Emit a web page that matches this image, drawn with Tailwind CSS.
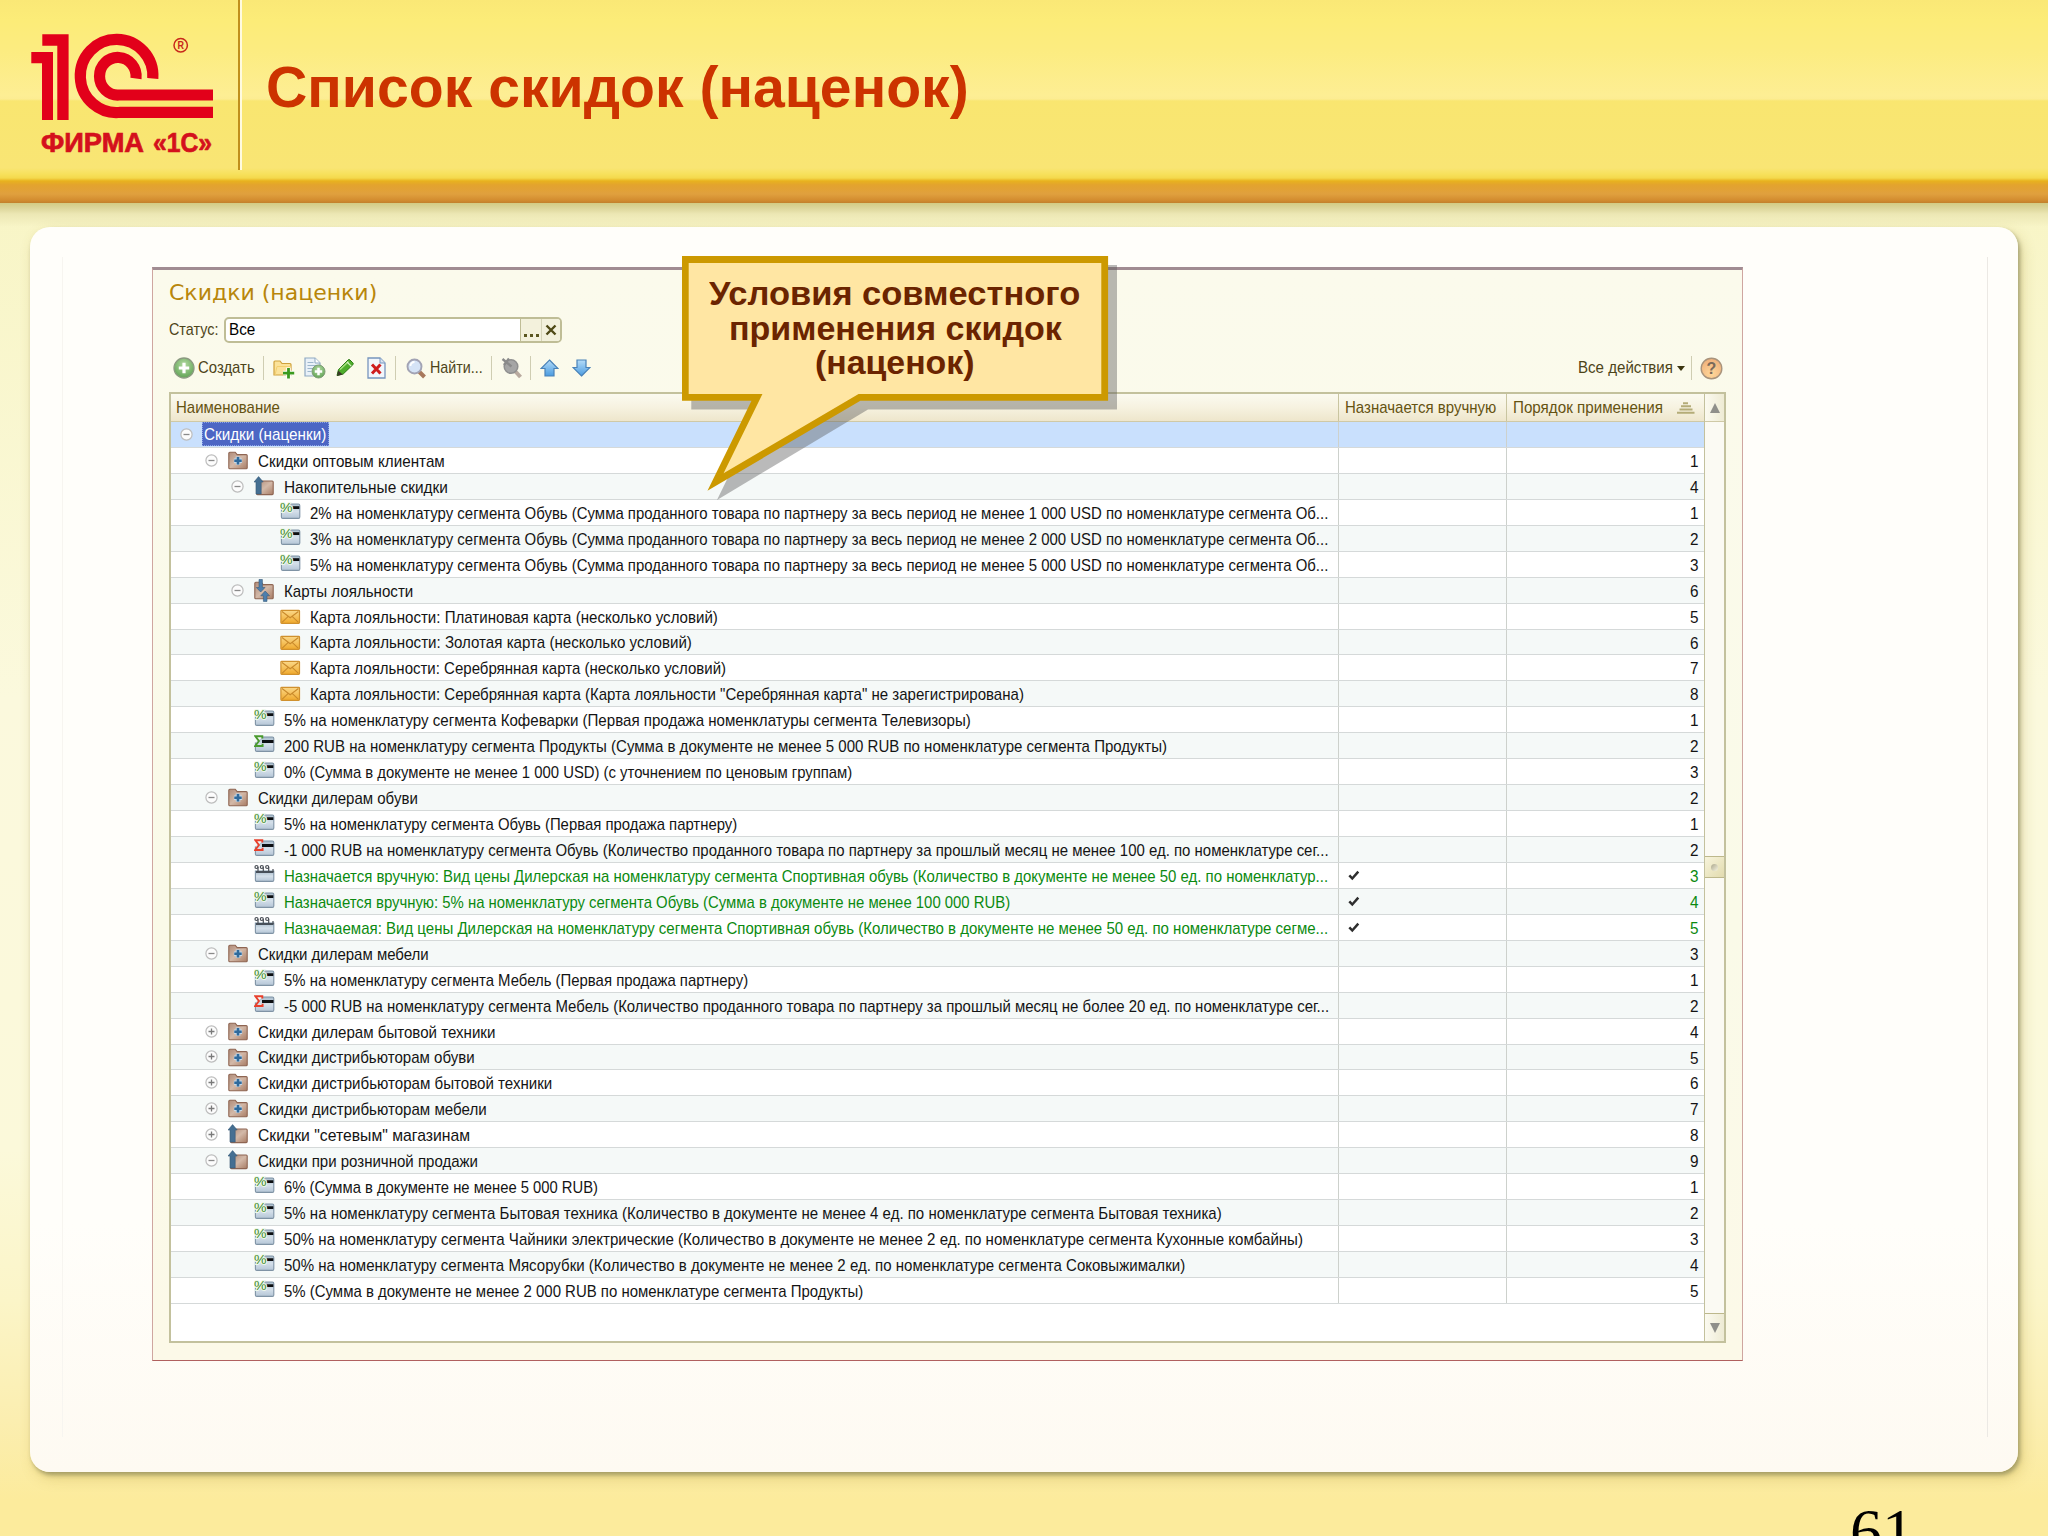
<!DOCTYPE html>
<html lang="ru">
<head>
    <meta charset="UTF-8">
    <meta name="viewport" content="width=device-width, initial-scale=1.0">
    <title>Список скидок (наценок)</title>
    <script src="https://cdn.jsdelivr.net/npm/@tailwindcss/browser@4"></script>
</head>
<body class="bg-[#fceb9c] font-['Liberation_Sans',Arial,sans-serif] overflow-hidden">

<!-- Иконки -->
<svg class="absolute size-0" width="0" height="0">
    <defs>
        <linearGradient id="gFolder" x1="0" y1="0" x2="1" y2="1"><stop offset="0" stop-color="#b08c7a"/><stop offset=".5" stop-color="#d3b9a8"/><stop offset="1" stop-color="#a87c64"/></linearGradient>
        <linearGradient id="gCard" x1="0" y1="0" x2="0" y2="1"><stop offset="0" stop-color="#a9bccb"/><stop offset=".5" stop-color="#d5e0ea"/><stop offset="1" stop-color="#b4c5d6"/></linearGradient>
        <linearGradient id="gMail" x1="0" y1="0" x2="0" y2="1"><stop offset="0" stop-color="#fbd98a"/><stop offset="1" stop-color="#f0a92c"/></linearGradient>
        <linearGradient id="gBlue" x1="0" y1="0" x2="0" y2="1"><stop offset="0" stop-color="#b5dcf8"/><stop offset="1" stop-color="#4a9be0"/></linearGradient>
        <radialGradient id="gGreen" cx=".5" cy=".35" r=".6"><stop offset="0" stop-color="#b4dba2"/><stop offset="1" stop-color="#68a85c"/></radialGradient>
        <radialGradient id="gHelp" cx=".5" cy=".75" r=".7"><stop offset="0" stop-color="#ffd79a"/><stop offset="1" stop-color="#f0b27c"/></radialGradient>
        <symbol id="i-minus" viewBox="0 0 13 13"><circle cx="6.5" cy="6.5" r="5.6" fill="#fcfcfc" stroke="#bdbdbd" stroke-width="1.2"/><path d="M3.5 6.5h6" stroke="#8a8a8a" stroke-width="1.3"/></symbol>
        <symbol id="i-plus" viewBox="0 0 13 13"><circle cx="6.5" cy="6.5" r="5.6" fill="#fcfcfc" stroke="#bdbdbd" stroke-width="1.2"/><path d="M3.5 6.5h6M6.5 3.5v6" stroke="#7a7a7a" stroke-width="1.3"/></symbol>
        <symbol id="i-folder" viewBox="0 0 21 25"><path d="M.8 19.8V5.2q0-1 1-1h5.4l2 2.4h9q1 0 1 1v12.2q0 1-1 1H1.8q-1 0-1-1z" fill="url(#gFolder)" stroke="#8e6552" stroke-width="1.1"/><path d="M10 8.6v8.2M5.9 12.7h8.2" stroke="#c4d8e8" stroke-width="4.6"/><path d="M10 9v7.4M6.3 12.7h7.4" stroke="#2f6a9c" stroke-width="2.6"/></symbol>
        <symbol id="i-folderup" viewBox="0 0 21 25"><path d="M2.5 19.6V7h15.7q1 0 1 1v11.6q0 1-1 1H3.5q-1 0-1-1z" fill="url(#gFolder)" stroke="#8e6552" stroke-width="1.1"/><path d="M4.6 2.6L9.2 8H7.2v12H2V8H0z" fill="#456f92" stroke="#375a78" stroke-width=".6"/></symbol>
        <symbol id="i-folderboth" viewBox="0 0 21 25"><path d="M.8 19.8V5.2q0-1 1-1h5.4l2 2.4h9q1 0 1 1v12.2q0 1-1 1H1.8q-1 0-1-1z" fill="url(#gFolder)" stroke="#8e6552" stroke-width="1.1"/><path d="M5 1.5h3.4v8H11L6.700 14 2.300 9.500H5z" fill="#4d7fae" stroke="#375a78" stroke-width=".6"/><path d="M9.400 23.400h3.600v-5.600h2.500L11.200 13l-4.400 4.800h2.600z" fill="#4d7fae" stroke="#375a78" stroke-width=".6"/></symbol>
        <symbol id="i-card" viewBox="0 0 21 25"><path d="M1.4 9.500V17q0 1.400 1.400 1.400h15.600q1.400 0 1.400-1.400V5.400Q19.800 4 18.400 4H9" fill="url(#gCard)" stroke="#7f93a5" stroke-width="1.100"/></symbol>
        <symbol id="i-percent" viewBox="0 0 21 25"><use href="#i-card" width="21" height="25"/><path d="M12.500 6.200h6.800v2.800h-6.800z" fill="#0c0f12"/><text x="0" y="12" font-size="13" fill="#3f8a2c" stroke="#eef8ea" stroke-width="2" paint-order="stroke" font-family="Liberation Sans" textLength="12.500" lengthAdjust="spacingAndGlyphs">%</text></symbol>
        <symbol id="i-sum" viewBox="0 0 21 25"><use href="#i-card" width="21" height="25"/><path d="M8 7h11.500v3H8z" fill="#0c0f12"/><path d="M8.300 5.500V3.300H1.400L4.900 8l-3.700 5h7.400v-2.300" fill="none" stroke="#4a9a2e" stroke-width="1.900"/></symbol>
        <symbol id="i-sumred" viewBox="0 0 21 25"><use href="#i-card" width="21" height="25"/><path d="M8 7h11.500v3H8z" fill="#0c0f12"/><path d="M8.300 5.500V3.300H1.400L4.900 8l-3.700 5h7.400v-2.300" fill="none" stroke="#e8402c" stroke-width="1.900"/></symbol>
        <symbol id="i-price" viewBox="0 0 21 25"><path d="M1.400 8h18.400v9q0 1.400-1.400 1.400H2.800q-1.400 0-1.400-1.400z" fill="url(#gCard)" stroke="#7f93a5" stroke-width="1.100"/><path d="M2 8h17.500v2H2z" fill="#47505a"/><g fill="#f4f4f4" stroke="#4a4f57" stroke-width="1.200"><circle cx="2.500" cy="4" r="1.500"/><circle cx="7.800" cy="4" r="1.500"/><circle cx="13.200" cy="4" r="1.500"/><path d="M4 4v5M9.300 4v5M14.700 4v5M19 6v3"/></g></symbol>
        <symbol id="i-mail" viewBox="0 0 21 25"><rect x=".900" y="6.300" width="18.600" height="13" rx=".800" fill="url(#gMail)" stroke="#d0912e" stroke-width="1.200"/><path d="M2 7.500l8.200 6.300 8.200-6.300M2 18.400l6-5.800M18.400 18.400l-6-5.800" fill="none" stroke="#c98a2c" stroke-width="1.100"/></symbol>
        <symbol id="i-check" viewBox="0 0 12 12"><path d="M1.300 6.300l3 3.200 6-6.800" fill="none" stroke="#2e2e2e" stroke-width="2.500"/></symbol>
    </defs>
</svg>

<div class="w-[2048px] h-[1536px] overflow-hidden flex flex-col bg-[linear-gradient(180deg,#f8f5c6_203px,#fbf9dd_700px,#fbf9da_1150px,#fbf5c8_1300px,#fbeeb0_1420px,#fceb9c_1500px)]">

    <!-- Шапка слайда -->
    <header class="h-[203px] shrink-0 flex items-start bg-[linear-gradient(180deg,#fae876_0px,#fcec78_20px,#fcec80_50px,#fdee94_96px,#fcec92_99px,#f9e670_101px,#f9e574_168px,#f7e15c_174px,#f4d94c_178px,#e8b21e_181px,#e3a32e_185px,#e0a03e_194px,#d38d30_200px,#c27f2c_203px)]">
        <div class="w-[238px] h-[170px] shrink-0">
            <svg width="238" height="170" viewBox="0 0 238 170">
                <g fill="#e2001a">
                    <path d="M42.300 34.300H68.600V120H57.300V45.700H42.300z"/>
                    <path d="M31.300 52H53V120H42V63.300H31.300z"/>
                </g>
                <g fill="none" stroke="#e2001a" stroke-width="11.200">
                    <path d="M213 112.300H120.500A36.300 36.600 0 1 1 152.800 78.500"/>
                    <path d="M213 95H119A18.300 18.800 0 1 1 136 78.500"/>
                </g>
                <circle cx="180.700" cy="45.300" r="6.700" fill="none" stroke="#c8281c" stroke-width="1.500"/>
                <text x="177.500" y="49.300" font-size="11" font-weight="bold" fill="#c8281c" textLength="6.500" lengthAdjust="spacingAndGlyphs">R</text>
                <text x="41" y="151.500" font-size="27" font-weight="bold" fill="#d4101c" stroke="#d4101c" stroke-width=".700" textLength="103" lengthAdjust="spacingAndGlyphs">ФИРМА</text>
                <text x="153" y="151.500" font-size="27" font-weight="bold" fill="#d4101c" stroke="#d4101c" stroke-width=".700" textLength="59" lengthAdjust="spacingAndGlyphs">«1С»</text>
            </svg>
        </div>
        <div class="w-[2px] h-[170px] bg-[#c08f1c]"></div>
        <div class="w-[2px] h-[170px] bg-[#fffbe0]"></div>
        <h1 class="ml-[24px] mt-[54px] text-[57px] leading-[66px] font-bold text-[#cc3300]"><span class="inline-block origin-left whitespace-nowrap" data-w="703">Список скидок (наценок)</span></h1>
    </header>
    <div class="h-[24px] shrink-0 bg-[linear-gradient(180deg,#d2ca84_0px,#dcd59a_5px,#ece7b4_11px,#f8f5c600_24px)]"></div>

    <!-- Карточка с содержимым -->
    <main class="relative ml-[30px] w-[1988px] h-[1245px] shrink-0 rounded-[20px] pt-[40px] pl-[122px] bg-[linear-gradient(180deg,#fffefa,#fffefa_80%,#fefaf2)] shadow-[2px_3px_4px_rgba(120,120,80,0.6),4px_6px_14px_rgba(170,140,40,0.3)]">
        <div class="absolute left-[32px] top-[30px] w-px h-[1180px] bg-[#f7f5f0]"></div>
        <div class="absolute left-[1957px] top-[30px] w-px h-[1180px] bg-[#ece9e4]"></div>

        <section class="w-[1591px] h-[1094px] border border-[#cfa6a0] border-b-[#b0605e] border-t-[3px] border-t-[#a18c92] bg-[linear-gradient(180deg,#fbfaec,#fafae8_60%,#fcf9e8)] pl-[16px] flex flex-col">
            <h2 class="h-[44px] pt-[9px] text-[22px] leading-[28px] text-[#b8860b] font-['DejaVu_Sans',Verdana,sans-serif]"><span class="inline-block origin-left whitespace-nowrap" data-w="208">Скидки (наценки)</span></h2>

            <!-- Отбор по статусу -->
            <div class="flex items-center h-[30px] mt-px text-[17px] text-[#4d4419]">
                <span class="inline-block shrink-0 origin-left whitespace-nowrap" data-w="49">Статус:</span>
                <div class="ml-[6px] w-[338px] h-[26px] border-2 border-[#bfbd96] rounded-[5px] bg-white flex items-center text-black overflow-hidden">
                    <div class="w-[294px] pl-[3px]"><span class="inline-block shrink-0 origin-left whitespace-nowrap" data-w="26">Все</span></div>
                    <div class="w-[21px] h-full border-l border-[#bfbd96] bg-[#f3f1dc] flex items-end justify-center gap-[3px] pb-[4px]">
                        <i class="size-[3px] bg-[#5a5620]"></i><i class="size-[3px] bg-[#5a5620]"></i><i class="size-[3px] bg-[#5a5620]"></i>
                    </div>
                    <div class="flex-1 h-full border-l border-[#d6d4b8] bg-[#f3f1dc] flex items-center justify-center">
                        <svg width="12" height="12" viewBox="0 0 12 12"><path d="M1.500 1.500l9 9M10.500 1.500l-9 9" stroke="#4f4a16" stroke-width="2.400"/></svg>
                    </div>
                </div>
            </div>

            <!-- Панель команд -->
            <div class="flex items-center h-[26px] mt-[10px] text-[17px] text-[#4d4419] w-[1557px]">
                <svg class="ml-[4px]" width="22" height="22" viewBox="0 0 22 22"><circle cx="11" cy="11" r="10" fill="url(#gGreen)" stroke="#8b9a80" stroke-width="1.300"/><path d="M11 5.800v10.400M5.800 11h10.400" stroke="#fff" stroke-width="3.200"/></svg>
                <span class="ml-[3px] inline-block shrink-0 origin-left whitespace-nowrap" data-w="57">Создать</span>
                <i class="ml-[8px] w-px h-[24px] bg-[#cfcdb2]"></i>
                <svg class="ml-[9px]" width="22" height="22" viewBox="0 0 22 22"><path d="M1 18V5q0-1 1-1h5l2 2.500h8q1 0 1 1V18z" fill="#fbe29a" stroke="#cfa13c" stroke-width="1.200"/><path d="M2 18l2-8.500h14" fill="none" stroke="#f3cf70"/><path d="M15.500 10.500v11M10 16h11" stroke="#fff" stroke-width="4.500"/><path d="M15.500 11v10.500M10 16.200h11.200" stroke="#3b9a1e" stroke-width="2.800"/></svg>
                <svg class="ml-[9px]" width="22" height="22" viewBox="0 0 22 22"><path d="M1 1h10l5 5v13H1z" fill="#e9f1f8" stroke="#8fa9c2" stroke-width="1.200"/><path d="M11 1v5h5" fill="#fff" stroke="#8fa9c2"/><path d="M3.500 5.500h6M3.500 8.500h10M3.500 11.500h6M3.500 14.500h4" stroke="#9db6cc" stroke-width="1.200"/><circle cx="14.500" cy="14.500" r="6.500" fill="url(#gGreen)" stroke="#7f9d76"/><path d="M14.500 10.800v7.400M10.800 14.500h7.400" stroke="#fff" stroke-width="2.500"/></svg>
                <svg class="ml-[10px]" width="19" height="20" viewBox="0 0 19 20"><path d="M1 17.500l1.500-6L12 2q1-1 2 0l2.800 2.800q1 1 0 2L7.200 16z" fill="#4fae2c" stroke="#2c7a16"/><path d="M4 11.500L12.500 3.500" stroke="#a5e07e" stroke-width="1.600"/><path d="M11 4l4.200 4.200" stroke="#d8f0c8" stroke-width="1.200"/><path d="M1 18l1.200-5.500 4.500 4z" fill="#3a3a28"/></svg>
                <svg class="ml-[12px]" width="19" height="22" viewBox="0 0 19 22"><path d="M1 1h12l5 5v15H1z" fill="#f2f6fb" stroke="#7795bd" stroke-width="1.300"/><path d="M13 1v5h5" fill="#d8e4f2" stroke="#7795bd"/><path d="M5 7.500l8.500 9M13.500 7.500l-8.500 9" stroke="#cf1d1d" stroke-width="3"/></svg>
                <i class="ml-[9px] w-px h-[24px] bg-[#cfcdb2]"></i>
                <svg class="ml-[10px]" width="21" height="21" viewBox="0 0 21 21"><path d="M12.500 13l6 6" stroke="#a8785c" stroke-width="4"/><circle cx="8.500" cy="8.500" r="7" fill="#d5e3f6" stroke="#a2a3b4" stroke-width="1.900"/><path d="M4.500 8a4 4 0 0 1 4-4" fill="none" stroke="#fff" stroke-width="1.800"/></svg>
                <span class="ml-[3px] inline-block shrink-0 origin-left whitespace-nowrap" data-w="53">Найти...</span>
                <i class="ml-[9px] w-px h-[24px] bg-[#cfcdb2]"></i>
                <svg class="ml-[9px]" width="22" height="22" viewBox="0 0 22 22"><path d="M14 14l5.500 6" stroke="#b9aa9f" stroke-width="4"/><circle cx="10" cy="9.500" r="6.800" fill="#a5a5a5" stroke="#8f8f8f" stroke-width="1.500"/><path d="M1.500 2l9 7.500M8 1.500l-5 6.500" stroke="#8a8a8a" stroke-width="2.400"/></svg>
                <i class="ml-[7px] w-px h-[24px] bg-[#cfcdb2]"></i>
                <svg class="ml-[9px]" width="19" height="18" viewBox="0 0 19 18"><path d="M9.500 1L18 9.500h-4V17H5V9.500H1z" fill="url(#gBlue)" stroke="#4a82b8" stroke-width="1.200"/></svg>
                <svg class="ml-[13px]" width="19" height="18" viewBox="0 0 19 18"><path d="M9.500 17L18 8.500h-4V1H5v7.500H1z" fill="url(#gBlue)" stroke="#4a82b8" stroke-width="1.200"/></svg>
                <div class="ml-auto flex items-center">
                    <span class="inline-block shrink-0 origin-left whitespace-nowrap" data-w="95">Все действия</span>
                    <svg class="ml-[4px]" width="8" height="5" viewBox="0 0 8 5"><path d="M0 0h8L4 5z" fill="#3c3510"/></svg>
                    <i class="ml-[6px] w-px h-[24px] bg-[#cfcdb2]"></i>
                    <svg class="ml-[8px] mr-[3px]" width="23" height="23" viewBox="0 0 23 23"><circle cx="11.500" cy="11.500" r="10.300" fill="url(#gHelp)" stroke="#a8937c" stroke-width="1.400"/><text x="11.500" y="17" text-anchor="middle" font-size="16" font-weight="bold" fill="#7b6a5a">?</text></svg>
                </div>
            </div>

            <!-- Таблица -->
            <div class="mt-[11px] w-[1557px] h-[951px] border-2 border-[#c3c19d] bg-white flex">
                <div class="w-[1533px] shrink-0 flex flex-col">
                    <div class="h-[28px] shrink-0 flex items-center border-b border-[#cfc9a6] bg-[linear-gradient(180deg,#fbfaf0,#f6f2e0_50%,#eee6cc)] text-[17px] text-[#655312]">
                        <div class="w-[1168px] shrink-0 h-full flex items-center pl-[5px] border-r border-[#c9c5a0]"><span class="inline-block shrink-0 origin-left whitespace-nowrap" data-w="104">Наименование</span></div>
                        <div class="w-[168px] shrink-0 h-full flex items-center pl-[6px] border-r border-[#c9c5a0]"><span class="inline-block shrink-0 origin-left whitespace-nowrap" data-w="151">Назначается вручную</span></div>
                        <div class="flex-1 h-full flex items-center pl-[6px]">
                            <span class="inline-block shrink-0 origin-left whitespace-nowrap" data-w="150">Порядок применения</span>
                            <svg class="ml-[14px]" width="18" height="12" viewBox="0 0 18 12"><path d="M6 1.200h5M4 4.200h10M2.500 7.400h13M0 10.700h17.500" stroke="#b4ac78" stroke-width="2"/></svg>
                        </div>
                    </div>
                    <div id="rows" class="flex-1"></div>
                </div>
                <!-- Полоса прокрутки -->
                <div class="flex-1 border-l border-[#c3c19d] bg-[#fbfaf3] flex flex-col">
                    <div class="h-[28px] flex items-center justify-center border-b border-[#cfc9a6] bg-[linear-gradient(90deg,#fbfaf0,#eeebd4)]">
                        <svg width="10" height="10" viewBox="0 0 10 10"><path d="M5 0l5 10H0z" fill="#8f8f8a"/></svg>
                    </div>
                    <div class="h-[434px]"></div>
                    <div class="h-[22px] border-y border-[#bdb88c] bg-[linear-gradient(135deg,#f7f4dc,#e2dbae)] flex items-center justify-center">
                        <i class="size-[7px] rounded-full bg-[linear-gradient(135deg,#aca88c,#f6f4e2)]"></i>
                    </div>
                    <div class="flex-1"></div>
                    <div class="h-[28px] flex items-center justify-center border-t border-[#bdb88c] bg-[linear-gradient(90deg,#fbfaf0,#eeebd4)]">
                        <svg width="10" height="10" viewBox="0 0 10 10"><path d="M5 10L0 0h10z" fill="#8f8f8a"/></svg>
                    </div>
                </div>
            </div>
        </section>

        <!-- Выноска -->
        <div class="absolute left-[652px] top-[29px] w-[440px] h-[250px]">
            <svg class="absolute left-0 top-0" width="440" height="250" viewBox="682 256 440 250">
                <path d="M691.300 265H1117V409.500H868L717 500L761 409.500H691.300V265z" fill="#5a5a5a" fill-opacity=".42"/>
                <path d="M685.300 259.500H1104.700V397.300H859.500L715.500 482L757 397.300H685.300z" fill="#ffe6a3" stroke="#cc9900" stroke-width="6.800" stroke-miterlimit="12"/>
            </svg>
            <div class="relative w-[426px] pt-[21px] flex flex-col items-center font-bold text-[33px] leading-[34.600px] text-[#6b2400]">
                <span class="inline-block shrink-0 origin-left whitespace-nowrap" data-w="371">Условия совместного</span>
                <span class="inline-block shrink-0 origin-left whitespace-nowrap" data-w="333">применения скидок</span>
                <span class="inline-block shrink-0 origin-left whitespace-nowrap" data-w="160">(наценок)</span>
            </div>
        </div>
    </main>

    <footer class="h-[64px] shrink-0 pl-[1850px] pt-[24px] font-['Liberation_Serif','Times_New_Roman',serif] text-[64px] leading-[72px] text-black">61</footer>
</div>

<script>
    // уровень, узел (+/-), иконка, текст, порядок, ширина текста, вручную
    const rows = [
        [0, "minus", "", "Скидки (наценки)", "", 122],
        [1, "minus", "folder", "Скидки оптовым клиентам", 1, 187],
        [2, "minus", "folderup", "Накопительные скидки", 4, 164],
        [3, "", "percent", "2% на номенклатуру сегмента Обувь (Сумма проданного товара по партнеру за весь период не менее 1 000 USD по номенклатуре сегмента Об...", 1, 1018],
        [3, "", "percent", "3% на номенклатуру сегмента Обувь (Сумма проданного товара по партнеру за весь период не менее 2 000 USD по номенклатуре сегмента Об...", 2, 1018],
        [3, "", "percent", "5% на номенклатуру сегмента Обувь (Сумма проданного товара по партнеру за весь период не менее 5 000 USD по номенклатуре сегмента Об...", 3, 1018],
        [2, "minus", "folderboth", "Карты лояльности", 6, 129],
        [3, "", "mail", "Карта лояльности: Платиновая карта (несколько условий)", 5, 408],
        [3, "", "mail", "Карта лояльности: Золотая карта (несколько условий)", 6, 382],
        [3, "", "mail", "Карта лояльности: Серебрянная карта (несколько условий)", 7, 416],
        [3, "", "mail", "Карта лояльности: Серебрянная карта (Карта лояльности \"Серебрянная карта\" не зарегистрирована)", 8, 714],
        [2, "", "percent", "5% на номенклатуру сегмента Кофеварки (Первая продажа номенклатуры сегмента Телевизоры)", 1, 687],
        [2, "", "sum", "200 RUB на номенклатуру сегмента Продукты (Сумма в документе не менее 5 000 RUB по номенклатуре сегмента Продукты)", 2, 883],
        [2, "", "percent", "0% (Сумма в документе не менее 1 000 USD) (с уточнением по ценовым группам)", 3, 568],
        [1, "minus", "folder", "Скидки дилерам обуви", 2, 160],
        [2, "", "percent", "5% на номенклатуру сегмента Обувь (Первая продажа партнеру)", 1, 453],
        [2, "", "sumred", "-1 000 RUB на номенклатуру сегмента Обувь (Количество проданного товара по партнеру за прошлый месяц не менее 100 ед. по номенклатуре сег...", 2, 1045],
        [2, "", "price", "Назначается вручную: Вид цены Дилерская на номенклатуру сегмента Спортивная обувь (Количество в документе не менее 50 ед. по номенклатур...", 3, 1044, true],
        [2, "", "percent", "Назначается вручную: 5% на номенклатуру сегмента Обувь (Сумма в документе не менее 100 000 RUB)", 4, 726, true],
        [2, "", "price", "Назначаемая: Вид цены Дилерская на номенклатуру сегмента Спортивная обувь (Количество в документе не менее 50 ед. по номенклатуре сегме...", 5, 1044, true],
        [1, "minus", "folder", "Скидки дилерам мебели", 3, 171],
        [2, "", "percent", "5% на номенклатуру сегмента Мебель (Первая продажа партнеру)", 1, 464],
        [2, "", "sumred", "-5 000 RUB на номенклатуру сегмента Мебель (Количество проданного товара по партнеру за прошлый месяц не более 20 ед. по номенклатуре сег...", 2, 1045],
        [1, "plus", "folder", "Скидки дилерам бытовой техники", 4, 237],
        [1, "plus", "folder", "Скидки дистрибьюторам обуви", 5, 217],
        [1, "plus", "folder", "Скидки дистрибьюторам бытовой техники", 6, 294],
        [1, "plus", "folder", "Скидки дистрибьюторам мебели", 7, 229],
        [1, "plus", "folderup", "Скидки \"сетевым\" магазинам", 8, 212],
        [1, "minus", "folderup", "Скидки при розничной продажи", 9, 220],
        [2, "", "percent", "6% (Сумма в документе не менее 5 000 RUB)", 1, 314],
        [2, "", "percent", "5% на номенклатуру сегмента Бытовая техника (Количество в документе не менее 4 ед. по номенклатуре сегмента Бытовая техника)", 2, 938],
        [2, "", "percent", "50% на номенклатуру сегмента Чайники электрические (Количество в документе не менее 2 ед. по номенклатуре сегмента Кухонные комбайны)", 3, 1019],
        [2, "", "percent", "50% на номенклатуру сегмента Мясорубки (Количество в документе не менее 2 ед. по номенклатуре сегмента Соковыжималки)", 4, 901],
        [2, "", "percent", "5% (Сумма в документе не менее 2 000 RUB по номенклатуре сегмента Продукты)", 5, 579]
    ];

    document.getElementById("rows").innerHTML = rows.map(([level, node, icon, text, order, width, manual], i) => {
        const bg = i === 0 ? "bg-[#c9e0fd]" : i % 2 ? "bg-white" : "bg-[#f5f9f8]";
        const color = manual ? "text-[#0b8a10]" : "text-[#141414]";
        const label = i === 0
            ? `<span class="ml-[9px] h-[24px] w-[127px] shrink-0 pl-[2px] pt-px flex items-center bg-[#4c66c4] text-white outline-1 outline-dotted outline-[#8fa6e6] -outline-offset-1"><span class="inline-block shrink-0 origin-left whitespace-nowrap" data-w="${width}">${text}</span></span>`
            : `<svg class="ml-[10px] shrink-0 self-start" width="21" height="25"><use href="#i-${icon}"/></svg><span class="ml-[9px] pt-[2px] inline-block shrink-0 origin-left whitespace-nowrap" data-w="${width}">${text}</span>`;
        return `<div class="flex h-[25.940px] border-b border-[#d5d9d9] text-[17px] leading-[25px] ${bg} ${color}">
            <div class="w-[1168px] shrink-0 flex items-center border-r border-[#cdd1cc]" style="padding-left:${8.5 + level * 25.85}px">
                <svg class="shrink-0" width="13" height="13">${node ? `<use href="#i-${node}"/>` : ""}</svg>${label}
            </div>
            <div class="w-[168px] shrink-0 flex items-center pl-[9px] border-r border-[#cdd1cc]">${manual ? `<svg width="12" height="12"><use href="#i-check"/></svg>` : ""}</div>
            <div class="flex-1 text-right pt-px pr-[6px]"><span class="inline-block origin-right scale-x-90">${order}</span></div>
        </div>`;
    }).join("");

    // подгоняем ширину надписей, в том числе после загрузки стилей
    function fit(el) {
        const natural = el.offsetWidth;
        const target = Number(el.dataset.w);
        if (!natural) return;
        el.style.transform = `scaleX(${target / natural})`;
        el.style.marginRight = `${target - natural}px`;
    }
    const observer = new ResizeObserver(entries => entries.forEach(e => fit(e.target)));
    const labels = document.querySelectorAll("[data-w]");
    labels.forEach(el => observer.observe(el));
    window.addEventListener("load", () => labels.forEach(fit));
</script>
</body>
</html>
